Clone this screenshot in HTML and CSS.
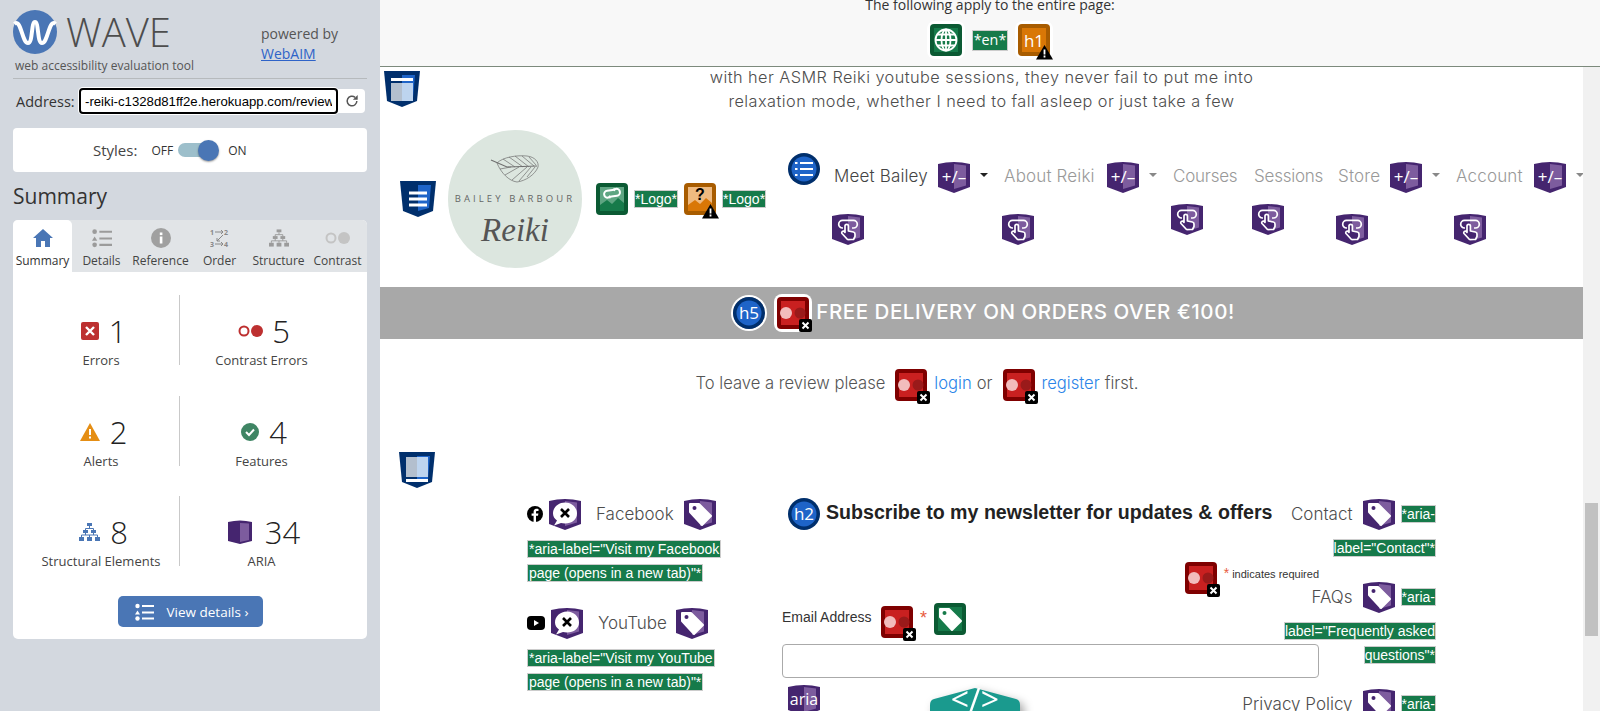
FILE: index.html
```html
<!DOCTYPE html>
<html lang="en">
<head>
<meta charset="utf-8">
<title>WAVE - Bailey Barbour Reiki</title>
<link rel="stylesheet" href="styles.css">
</head>
<body>
<svg class="sprite" aria-hidden="true">
  <defs>
    <g id="shield">
      <path fill="#45256f" d="M0 3Q16-1 32 3V26L16 32 0 26Z"/>
      <path fill="#7d5c9e" d="M16 3L28 4.500V24.500L16 28Z"/>
    </g>
    <g id="touch">
      <use href="#shield"/>
      <path fill="none" stroke="#fff" stroke-width="1.700" d="M11 15H10.500a3.800 3.800 0 0 1 0-7.600H21.500a3.800 3.800 0 0 1 0 7.600H20"/>
      <path fill="#45256f" stroke="#fff" stroke-width="1.700" stroke-linejoin="round" d="M13 13a1.700 1.700 0 0 1 3.400 0v5l5 1a2 2 0 0 1 1.600 2v2.500l-1.500 3h-6l-5.500-6a1.500 1.500 0 0 1 2.500-1.700l.5.500z"/>
    </g>
    <g id="tagshape">
      <path fill="#fff" stroke="#fff" stroke-width="2" stroke-linejoin="round" d="M6 6H15L27 18 18 27 6 14Z"/>
    </g>
    <g id="aria-tag">
      <use href="#shield"/>
      <use href="#tagshape"/>
      <circle cx="10.500" cy="10" r="2" fill="#45256f"/>
    </g>
    <g id="aria-x">
      <use href="#shield"/>
      <path fill="#fff" d="M16 4.500C23 4.500 28 9.500 28 15.500S23 25.500 16 25.500C14.500 25.500 13 25.300 12 25L5 27.500 8 22.500C5.500 20.800 4 18.500 4 15.500 4 9.500 9 4.500 16 4.500Z"/>
      <path stroke="#000" stroke-width="2.600" d="M12 11L20 19M20 11L12 19"/>
    </g>
    <g id="red">
      <rect width="32" height="32" rx="4" fill="#7f0000"/>
      <rect x="4" y="4" width="24" height="24" fill="#c92020"/>
      <circle cx="9" cy="16" r="6" fill="#f2bcbc"/>
      <circle cx="23" cy="16" r="5.500" fill="#9a1a1a"/>
      <rect x="22" y="22" width="13" height="13" rx="2" fill="#000"/>
      <path stroke="#fff" stroke-width="2" d="M25.500 25.500L31.500 31.500M31.500 25.500L25.500 31.500"/>
    </g>
    <g id="green">
      <rect width="32" height="32" rx="4" fill="#0b5a33"/>
      <rect x="4" y="4" width="24" height="24" fill="#167a4a"/>
    </g>
    <g id="green-tag">
      <use href="#green"/>
      <use href="#tagshape"/>
      <circle cx="10.500" cy="10" r="2" fill="#167a4a"/>
    </g>
    <g id="green-link">
      <use href="#green"/>
      <rect x="4" y="4" width="24" height="24" fill="#5fa582"/>
      <path fill="#167a4a" d="M4 28V22L11 17 16 21 22 15 28 20V28Z"/>
      <g fill="none" stroke="#fff" stroke-width="2" transform="rotate(-8 16 10)">
        <path d="M14 14H11.500a3.500 3.500 0 0 1 0-7H17a3.500 3.500 0 0 1 2.500 1"/>
        <path d="M18 6.500H20.500a3.500 3.500 0 0 1 0 7H15a3.500 3.500 0 0 1-2.500-1"/>
      </g>
    </g>
    <g id="green-globe">
      <use href="#green"/>
      <g fill="none" stroke="#fff" stroke-width="1.800">
        <circle cx="16" cy="16" r="10.500"/>
        <ellipse cx="16" cy="16" rx="4.500" ry="10.500"/>
        <path d="M16 5.500V26.500M5.500 16H26.500M7 10.500H25M7 21.500H25"/>
      </g>
    </g>
    <g id="warn">
      <path fill="#000" d="M26.500 21L35 35.500H18Z"/>
      <path stroke="#fff" stroke-width="1.800" d="M26.500 25.500V30.500M26.500 31.500V33.500"/>
    </g>
    <g id="orange-alt">
      <rect width="32" height="32" rx="4" fill="#a85c00"/>
      <rect x="4" y="4" width="24" height="24" fill="#efba80"/>
      <path fill="#d97706" d="M4 28V22L11 17 16 21 22 15 28 20V28Z"/>
    </g>
    <g id="orange">
      <rect width="32" height="32" rx="4" fill="#a85c00"/>
      <rect x="4" y="4" width="24" height="24" fill="#d97706"/>
    </g>
    <g id="blue-circle">
      <circle cx="16" cy="16" r="16" fill="#002f6c"/>
      <circle cx="16" cy="16" r="12.500" fill="#1e64c8"/>
    </g>
    <g id="struct-base">
      <path fill="#002f6c" d="M0 0H36L33 30 18 36 3 30Z"/>
      <path fill="#1e64c8" d="M18 4H31L29 27 18 30Z"/>
    </g>
    <g id="struct-main">
      <use href="#struct-base"/>
      <rect x="7" y="7" width="22" height="3" fill="#fff"/>
      <rect x="7" y="12" width="11" height="18" fill="#b3bfce"/>
      <rect x="18" y="12" width="11" height="18" fill="#bdd4ef"/>
    </g>
    <g id="struct-foot">
      <use href="#struct-base"/>
      <rect x="7" y="5" width="11" height="20" fill="#b3bfce"/>
      <rect x="18" y="5" width="11" height="20" fill="#bdd4ef"/>
      <rect x="7" y="27" width="22" height="3" fill="#fff"/>
    </g>
    <g id="struct-nav">
      <use href="#struct-base"/>
      <path stroke="#fff" stroke-width="2.800" d="M9 12H27M9 18H27M9 24H27"/>
    </g>
    <g id="list">
      <circle cx="2.500" cy="3" r="2.200" fill="currentColor"/>
      <path d="M2.500 7.500L5 11.500H0Z" fill="currentColor"/>
      <circle cx="2.500" cy="15.500" r="2.200" fill="currentColor"/>
      <path stroke="currentColor" stroke-width="2" d="M7 3H19M7 9.500H19M7 15.500H19"/>
    </g>
    <g id="tree" fill="currentColor">
      <rect x="8" y="0" width="5" height="3"/>
      <rect x="4" y="7" width="5" height="3"/>
      <rect x="12" y="7" width="5" height="3"/>
      <rect x="0" y="14" width="5" height="4"/>
      <rect x="8" y="14" width="5" height="4"/>
      <rect x="16" y="14" width="5" height="4"/>
      <path fill="none" stroke="currentColor" d="M10.500 3V5.500M6.500 7V5.500H14.500V7M6.500 10V12M14.500 10V12M2.500 14V12H18.500V14M10.500 12V14"/>
    </g>
  </defs>
</svg>

<aside class="sidebar">
  <div class="brand">
    <div class="brand-main">
      <div class="brand-logo">
        <svg class="wave-logo" viewBox="0 0 44 44"><circle cx="22" cy="22" r="22" fill="#4a76b5"/><path fill="none" stroke="#fff" stroke-width="4" d="M1.500 14C8 8 9 33 15 33 20 33 18 12 22 12 26 12 24 33 29 33 35 33 36 8 42.500 14"/></svg>
        <span class="wave-name">WAVE</span>
      </div>
      <div class="tagline">web accessibility evaluation tool</div>
    </div>
    <div class="powered">powered by<br><a href="#">WebAIM</a></div>
  </div>

  <div class="address">
    <label class="address-label" for="addr">Address:</label>
    <input class="address-input" id="addr" type="text" value="-reiki-c1328d81ff2e.herokuapp.com/review">
    <button class="reload" aria-label="Reload">
      <svg viewBox="0 0 16 16" width="14" height="14"><path fill="none" stroke="#555" stroke-width="1.700" d="M13.500 8A5.500 5.500 0 1 1 11.500 3.800"/><path fill="#555" d="M14.500 1V6.500H9Z"/></svg>
    </button>
  </div>

  <div class="styles-card">
    <span class="styles-label">Styles:</span>
    <span class="styles-opt off">OFF</span>
    <span class="toggle"><span class="knob"></span></span>
    <span class="styles-opt">ON</span>
  </div>

  <h2 class="summary-title">Summary</h2>

  <div class="panel">
    <nav class="tabs">
      <div class="tab active">
        <svg class="tab-ico" viewBox="0 0 20 18"><path fill="#4a76b5" d="M10 0L20 9H17V18H12V12H8V18H3V9H0Z"/></svg>
        <span>Summary</span>
      </div>
      <div class="tab">
        <svg class="tab-ico grey" viewBox="0 0 19 18"><use href="#list"/></svg>
        <span>Details</span>
      </div>
      <div class="tab">
        <svg class="tab-ico" viewBox="0 0 20 20"><circle cx="10" cy="10" r="10" fill="#a0a0a0"/><rect x="8.800" y="8.500" width="2.600" height="7" fill="#fff"/><rect x="8.800" y="4.500" width="2.600" height="2.600" fill="#fff"/></svg>
        <span>Reference</span>
      </div>
      <div class="tab">
        <svg class="tab-ico" viewBox="0 0 20 20"><g class="order-nums"><text x="0" y="7">1</text><text x="14" y="7">2</text><text x="0" y="19">3</text><text x="14" y="19">4</text></g><path fill="none" stroke="#888" d="M5 4H13M11 2L13 4 11 6M5 16H13M11 14L13 16 11 18M13 7L7 13M7 10V13H10"/></svg>
        <span>Order</span>
      </div>
      <div class="tab">
        <svg class="tab-ico grey" viewBox="0 0 21 18"><use href="#tree"/></svg>
        <span>Structure</span>
      </div>
      <div class="tab">
        <svg class="tab-ico wide" viewBox="0 0 25 12"><circle cx="6" cy="6" r="4.500" fill="none" stroke="#c4c4c4" stroke-width="2"/><circle cx="19" cy="6" r="6" fill="#c4c4c4"/></svg>
        <span>Contrast</span>
      </div>
    </nav>

    <div class="stats">
      <div class="stat">
        <div class="stat-line">
          <svg class="stat-ico" viewBox="0 0 18 18"><rect width="18" height="18" rx="2" fill="#bd3030"/><path stroke="#fff" stroke-width="2.400" d="M5 5L13 13M13 5L5 13"/></svg>
          <span class="stat-num">1</span>
        </div>
        <div class="stat-label">Errors</div>
      </div>
      <div class="stat">
        <div class="stat-line">
          <svg class="stat-ico wide" viewBox="0 0 25 12"><circle cx="6" cy="6" r="4.500" fill="none" stroke="#bd3030" stroke-width="2"/><circle cx="19" cy="6" r="6" fill="#bd3030"/></svg>
          <span class="stat-num">5</span>
        </div>
        <div class="stat-label">Contrast Errors</div>
      </div>
      <div class="stat">
        <div class="stat-line">
          <svg class="stat-ico tri" viewBox="0 0 20 18"><path fill="#e58e14" d="M10 0L20 18H0Z"/><path stroke="#fff" stroke-width="2" d="M10 6V12M10 13.500V15.500"/></svg>
          <span class="stat-num">2</span>
        </div>
        <div class="stat-label">Alerts</div>
      </div>
      <div class="stat">
        <div class="stat-line">
          <svg class="stat-ico" viewBox="0 0 18 18"><circle cx="9" cy="9" r="9" fill="#3f8564"/><path fill="none" stroke="#fff" stroke-width="2" d="M5 9L8 12 13 6.500"/></svg>
          <span class="stat-num">4</span>
        </div>
        <div class="stat-label">Features</div>
      </div>
      <div class="stat">
        <div class="stat-line">
          <svg class="stat-ico tree-ico" viewBox="0 0 21 18"><use href="#tree"/></svg>
          <span class="stat-num">8</span>
        </div>
        <div class="stat-label">Structural Elements</div>
      </div>
      <div class="stat">
        <div class="stat-line">
          <svg class="stat-ico aria-ico" viewBox="0 0 24 24"><path fill="#45256f" d="M0 2Q12-1 24 2V21L12 24 0 21Z"/><path fill="#7d5c9e" d="M12 3L21 3.500V20L12 22Z"/></svg>
          <span class="stat-num">34</span>
        </div>
        <div class="stat-label">ARIA</div>
      </div>
    </div>

    <a class="view-details" href="#">
      <svg class="view-ico" viewBox="0 0 19 18"><use href="#list"/></svg>
      <span>View details ›</span>
    </a>
  </div>
</aside>

<main class="main">
  <header class="notice-bar">
    <p class="notice-text">The following apply to the entire page:</p>
    <div class="notice-icons">
      <svg class="ico ring" viewBox="0 0 32 32"><use href="#green-globe"/></svg>
      <span class="tag-en">*en*</span>
      <svg class="ico ring" viewBox="0 0 32 32"><use href="#orange"/><text class="ico-text" x="16" y="22.500" text-anchor="middle" font-size="17">h1</text><use href="#warn"/></svg>
    </div>
  </header>

  <div class="viewport">
    <div class="page">
      <svg class="struct over-main" viewBox="0 0 36 36"><use href="#struct-main"/></svg>
      <p class="quote">with her ASMR Reiki youtube sessions, they never fail to put me into<br>relaxation mode, whether I need to fall asleep or just take a few</p>

      <div class="site-header">
        <svg class="struct header-struct" viewBox="0 0 36 36"><use href="#struct-nav"/></svg>
        <svg class="logo" viewBox="0 0 136 140">
          <ellipse cx="68" cy="70" rx="67" ry="69" fill="#dce6df"/>
          <g fill="none" stroke="#6f6f6f" stroke-width=".7">
            <path stroke-width="1.100" d="M44 31L60 38 90 37"/>
            <path d="M50 34C56 28 70 26 80 27 88 28 92 33 91 38 88 46 78 52 70 53 62 52 54 44 50 34Z"/>
            <path d="M56 30L68 38M62 28L76 38M68 27L82 38M75 27L87 37M82 28L89 36M53 40L64 38M58 46L72 38M65 51L80 38M72 52L84 38M80 48L88 38"/>
          </g>
          <text class="logo-top" x="68" y="73" text-anchor="middle">BAILEY BARBOUR</text>
          <text class="logo-script" x="68" y="112" text-anchor="middle">Reiki</text>
        </svg>
        <svg class="ico hdr-link" viewBox="0 0 32 32"><use href="#green-link"/></svg>
        <span class="tag tag-hdr">*Logo*</span>
        <svg class="ico hdr-alt" viewBox="0 0 32 32"><use href="#orange-alt"/><text x="16" y="17" text-anchor="middle" class="qmark">?</text><use href="#warn"/></svg>
        <span class="tag tag-hdr">*Logo*</span>

        <nav class="site-nav">
          <svg class="ico nav-list" viewBox="0 0 32 32"><use href="#blue-circle"/><path stroke="#fff" stroke-width="2.200" d="M12 10H25M12 16H25M12 22H25M7 10H9.500M7 16H9.500M7 22H9.500"/></svg>
          <div class="nav-item">
            <div class="nav-top">
              <a class="nav-link dark w-meet" href="#">Meet Bailey</a>
              <svg class="ico" viewBox="0 0 32 32"><use href="#shield"/><text class="ico-text" x="16" y="21.500" text-anchor="middle" font-size="17">+/–</text></svg>
              <span class="caret dark-caret"></span>
            </div>
            <svg class="ico nav-bottom" viewBox="0 0 32 32"><use href="#touch"/></svg>
          </div>
          <div class="nav-item">
            <div class="nav-top">
              <a class="nav-link w-about" href="#">About Reiki</a>
              <svg class="ico" viewBox="0 0 32 32"><use href="#shield"/><text class="ico-text" x="16" y="21.500" text-anchor="middle" font-size="17">+/–</text></svg>
              <span class="caret"></span>
            </div>
            <svg class="ico nav-bottom" viewBox="0 0 32 32"><use href="#touch"/></svg>
          </div>
          <div class="nav-item plain">
            <div class="nav-top"><a class="nav-link w-courses" href="#">Courses</a></div>
            <svg class="ico nav-bottom" viewBox="0 0 32 32"><use href="#touch"/></svg>
          </div>
          <div class="nav-item plain">
            <div class="nav-top"><a class="nav-link w-sessions" href="#">Sessions</a></div>
            <svg class="ico nav-bottom" viewBox="0 0 32 32"><use href="#touch"/></svg>
          </div>
          <div class="nav-item">
            <div class="nav-top">
              <a class="nav-link w-store" href="#">Store</a>
              <svg class="ico" viewBox="0 0 32 32"><use href="#shield"/><text class="ico-text" x="16" y="21.500" text-anchor="middle" font-size="17">+/–</text></svg>
              <span class="caret"></span>
            </div>
            <svg class="ico nav-bottom" viewBox="0 0 32 32"><use href="#touch"/></svg>
          </div>
          <div class="nav-item">
            <div class="nav-top">
              <a class="nav-link w-account" href="#">Account</a>
              <svg class="ico" viewBox="0 0 32 32"><use href="#shield"/><text class="ico-text" x="16" y="21.500" text-anchor="middle" font-size="17">+/–</text></svg>
              <span class="caret"></span>
            </div>
            <svg class="ico nav-bottom" viewBox="0 0 32 32"><use href="#touch"/></svg>
          </div>
        </nav>
      </div>

      <div class="promo">
        <svg class="ico ring-round" viewBox="0 0 32 32"><use href="#blue-circle"/><text class="ico-text" x="16" y="22" text-anchor="middle" font-size="17">h5</text></svg>
        <svg class="ico ring" viewBox="0 0 32 32"><use href="#red"/></svg>
        <span class="promo-text">FREE DELIVERY ON ORDERS OVER €100!</span>
      </div>

      <div class="review-note">
        <span>To leave a review please</span>
        <svg class="ico note-ico" viewBox="0 0 32 32"><use href="#red"/></svg>
        <a href="#">login</a>
        <span>or</span>
        <svg class="ico note-ico" viewBox="0 0 32 32"><use href="#red"/></svg>
        <a href="#">register</a>
        <span>first.</span>
      </div>

      <svg class="struct footer-struct" viewBox="0 0 36 36"><use href="#struct-foot"/></svg>

      <div class="footer-grid">
        <div class="col-social">
          <div class="social-row">
            <svg class="brand-ico" viewBox="0 0 16 16"><circle cx="8" cy="8" r="8" fill="#000"/><path fill="#fff" d="M9 16V9.800H11L11.400 7.500H9V6C9 5.300 9.300 4.900 10.200 4.900H11.500V2.900C11 2.800 10.400 2.700 9.800 2.700 7.800 2.700 6.600 3.900 6.600 5.800V7.500H4.600V9.800H6.600V16Z"/></svg>
            <svg class="ico" viewBox="0 0 32 32"><use href="#aria-x"/></svg>
            <a class="foot-link fb" href="#">Facebook</a>
            <svg class="ico" viewBox="0 0 32 32"><use href="#aria-tag"/></svg>
          </div>
          <p class="aria-lines w-fb"><span class="tag">*aria-label="Visit my Facebook page (opens in a new tab)"*</span></p>
          <div class="social-row">
            <svg class="brand-ico yt" viewBox="0 0 18 14"><rect width="18" height="14" rx="4" fill="#000"/><path fill="#fff" d="M7 4L12 7 7 10Z"/></svg>
            <svg class="ico" viewBox="0 0 32 32"><use href="#aria-x"/></svg>
            <a class="foot-link yt-link" href="#">YouTube</a>
            <svg class="ico" viewBox="0 0 32 32"><use href="#aria-tag"/></svg>
          </div>
          <p class="aria-lines w-fb"><span class="tag">*aria-label="Visit my YouTube page (opens in a new tab)"*</span></p>
        </div>

        <div class="col-form">
          <div class="form-head">
            <svg class="ico" viewBox="0 0 32 32"><use href="#blue-circle"/><text class="ico-text" x="16" y="22" text-anchor="middle" font-size="17">h2</text></svg>
            <h2>Subscribe to my newsletter for updates &amp; offers</h2>
          </div>
          <div class="required-row">
            <svg class="ico" viewBox="0 0 32 32"><use href="#red"/></svg>
            <span class="required-text"><span class="star">*</span> indicates required</span>
          </div>
          <div class="email-row">
            <label class="email-label" for="email">Email Address</label>
            <svg class="ico email-red" viewBox="0 0 32 32"><use href="#red"/></svg>
            <span class="star big">*</span>
            <svg class="ico" viewBox="0 0 32 32"><use href="#green-tag"/></svg>
          </div>
          <input class="email-input" id="email" type="email">
          <svg class="ico form-aria" viewBox="0 0 32 32"><use href="#shield"/><text class="ico-text" x="16" y="21" text-anchor="middle" font-size="16">aria</text></svg>
        </div>

        <div class="col-links">
          <div class="link-row">
            <a class="foot-link" href="#">Contact</a>
            <svg class="ico" viewBox="0 0 32 32"><use href="#aria-tag"/></svg>
            <span class="tag tag-tight">*aria-</span>
          </div>
          <p class="aria-lines right"><span class="tag tag-tight">label="Contact"*</span></p>
          <div class="link-row">
            <a class="foot-link" href="#">FAQs</a>
            <svg class="ico" viewBox="0 0 32 32"><use href="#aria-tag"/></svg>
            <span class="tag tag-tight">*aria-</span>
          </div>
          <p class="aria-lines right"><span class="tag tag-tight">label="Frequently asked questions"*</span></p>
          <div class="link-row">
            <a class="foot-link" href="#">Privacy Policy</a>
            <svg class="ico" viewBox="0 0 32 32"><use href="#aria-tag"/></svg>
            <span class="tag tag-tight">*aria-</span>
          </div>
        </div>
      </div>

      <svg class="code-fab" viewBox="0 0 90 50"><path fill="#1a9a8e" d="M45 0L86 11Q90 12 90 17V50H0V17Q0 12 4 11Z"/><text class="fab-text" x="45" y="23" text-anchor="middle">&lt;/&gt;</text></svg>
    </div>
    <div class="scrollbar"><div class="scroll-thumb"></div></div>
  </div>
</main>
</body>
</html>
```

FILE: styles.css
```css
* { box-sizing: border-box; }
html, body { margin: 0; height: 100%; }
body {
  display: flex;
  width: 1600px;
  height: 711px;
  overflow: hidden;
  font-family: "Open Sans", sans-serif;
  color: #333;
  background: #fff;
}
p, h2 { margin: 0; }
a { text-decoration: none; }
.sprite { position: absolute; width: 0; height: 0; }

/* ---------- sidebar ---------- */
.sidebar {
  flex: 0 0 380px;
  height: 711px;
  padding: 10px 13px 0;
  background: #d3d8df;
}
.brand {
  display: flex;
  height: 69px;
  border-bottom: 1px solid #b6babd;
}
.brand-main { width: 248px; }
.brand-logo { display: flex; align-items: center; height: 44px; }
.wave-logo { width: 44px; height: 44px; margin-right: 9px; }
.wave-name { font-size: 40px; font-weight: 300; color: #4d4d4d; line-height: 44px; }
.tagline { margin: 3px 0 0 2px; font-size: 12px; line-height: 18px; color: #555; white-space: nowrap; }
.powered { margin-top: 14px; font-size: 14px; line-height: 19.500px; color: #555; }
.powered a { color: #2e63c8; text-decoration: underline; }

.address { display: flex; align-items: center; height: 26px; margin: 9px 2px 0 0; padding-left: 3px; }
.address-label { width: 63px; font-size: 14.500px; color: #333; white-space: nowrap; }
.address-input {
  width: 259px;
  height: 26px;
  padding: 0 4px;
  border: 2px solid #000;
  border-radius: 4px;
  box-shadow: 0 0 0 1px #fff;
  font: 13.200px "Liberation Sans", sans-serif;
  color: #000;
  background: #fff;
}
.reload {
  display: flex;
  align-items: center;
  justify-content: center;
  width: 27px;
  height: 24px;
  padding: 0;
  border: 0;
  border-radius: 0 4px 4px 0;
  background: #fff;
}

.styles-card {
  display: flex;
  align-items: center;
  height: 44px;
  margin-top: 14px;
  padding-left: 80px;
  border-radius: 4px;
  background: #fff;
}
.styles-label { margin-right: 14px; font-size: 15px; color: #444; }
.styles-opt { font-size: 12px; color: #333; }
.toggle { position: relative; width: 36px; height: 14px; margin: 0 14px 0 5px; border-radius: 7px; background: #9dbfcb; }
.knob {
  position: absolute;
  top: -3.500px;
  right: -5px;
  width: 21px;
  height: 21px;
  border-radius: 50%;
  background: #4a76b5;
  box-shadow: 0 1px 2px rgba(0,0,0,.4);
}

.summary-title { margin: 4px 0 4px; font-size: 21px; font-weight: 400; line-height: 40px; color: #333; }

.panel { height: 419px; border-radius: 5px; background: #fff; }
.tabs { display: flex; height: 52px; border-radius: 5px 5px 0 0; background: #e1e4e7; }
.tab { display: flex; flex: 1; flex-direction: column; align-items: center; min-width: 0; padding-top: 8px; font-size: 12px; color: #444; white-space: nowrap; border-radius: 5px 5px 0 0; }
.tab.active { background: #fff; color: #333; }
.tab span { margin-top: 4px; line-height: 17px; }
.tab-ico { width: 20px; height: 20px; }
.tab-ico.grey { color: #9b9b9b; }
.tab-ico.wide { width: 25px; }
.order-nums text { font: 700 7px "Open Sans", sans-serif; fill: #888; }

.stats {
  display: grid;
  grid-template-columns: 156px 164px;
  grid-auto-rows: 70px;
  row-gap: 30.500px;
  margin: 23px 0 0 10px;
}
.stat { text-align: center; }
.stat:nth-child(even) { border-left: 1px solid #c9c9c9; }
.stat-line { display: flex; align-items: center; justify-content: center; height: 44px; margin-top: 14px; padding-left: 5px; }
.stat-ico { width: 18px; height: 18px; margin-right: 10px; }
.stat-ico.wide { width: 25px; margin-right: 9px; }
.stat-ico.tri { width: 20px; }
.stat-ico.tree-ico { width: 21px; color: #4a76b5; }
.stat-ico.aria-ico { width: 24px; height: 24px; margin-right: 13px; }
.stat-num { font-size: 31px; font-weight: 300; color: #222; line-height: 44px; }
.stat-label { font-size: 13px; line-height: 14px; color: #444; white-space: nowrap; }

.view-details {
  display: flex;
  align-items: center;
  width: 145px;
  height: 31px;
  margin: 30px auto 0;
  padding-left: 17px;
  border-radius: 5px;
  background: #4a76b5;
  color: #fff;
  font-size: 13.500px;
}
.view-ico { width: 19px; height: 18px; margin-right: 13px; color: #fff; }

/* ---------- main ---------- */
.main { display: flex; flex: 1; flex-direction: column; min-width: 0; height: 711px; }
.notice-bar { flex: 0 0 67px; overflow: hidden; border-bottom: 1px solid #7c8a7c; background: #f8f8f8; text-align: center; }
.notice-text { margin-top: -5px; font-size: 14px; line-height: 20px; color: #333; }
.notice-icons { display: flex; justify-content: center; align-items: center; gap: 10px; margin-top: 9px; }
.tag-en { height: 21px; padding: 0 1px; border: 1px solid #ccc; background: #167a4a; color: #fff; font-size: 14.300px; line-height: 18px; }

.ico { flex: none; width: 32px; height: 32px; overflow: visible; }
.ring { border-radius: 5px; background: #fff; box-shadow: 0 0 0 3px #fff; }
.ring-round { border-radius: 50%; box-shadow: 0 0 0 2px #fff; }
.ico-text { font-family: "Open Sans", sans-serif; font-weight: 400; fill: #fff; }
.qmark { font: 700 16px "Liberation Sans", sans-serif; fill: #000; }

.viewport { display: flex; flex: 1; min-height: 0; }
.page { position: relative; flex: 1; min-width: 0; overflow: hidden; background: #fff; font-family: Inter, sans-serif; font-weight: 300; color: #555; }
.scrollbar { flex: 0 0 17px; padding: 436px 2px 0; background: #f1f1f1; }
.scroll-thumb { height: 133px; background: #c1c1c1; }

.struct { display: block; width: 36px; height: 36px; }
.over-main { position: absolute; left: 4px; top: 4px; }

.quote { margin-top: -2px; height: 60px; font-size: 16.300px; line-height: 24px; text-align: center; color: #4d4d4d; letter-spacing: .45px; }

.site-header { display: flex; align-items: flex-start; height: 162px; padding: 4px 0 0 20px; }
.header-struct { flex: none; margin-top: 52px; }
.logo { flex: none; width: 136px; height: 140px; margin-left: 11px; }
.logo-top { font: 400 9.500px "Open Sans", sans-serif; letter-spacing: 3.100px; fill: #666; }
.logo-script { font: italic 400 33px "Liberation Serif", serif; fill: #555; }
.hdr-link { margin: 54px 0 0 13px; }
.hdr-alt { margin: 54px 0 0 6px; }

.tag { padding: 0 1px; border: 1px solid #ccc; background: #167a4a; color: #fff; font: 400 14px "Liberation Sans", sans-serif; -webkit-box-decoration-break: clone; box-decoration-break: clone; }
.tag-hdr { margin: 61px 0 0 6px; padding: 0; line-height: 16px; }
.tag-tight { padding: 0; }

.site-nav { display: flex; flex: none; align-items: flex-start; gap: 14px; margin: 24px 0 0 22px; }
.nav-list { margin-right: -2px; }
.nav-item { padding-top: 8px; }
.nav-top { display: flex; align-items: flex-start; height: 32px; }
.nav-link { padding-left: 2px; font-size: 17px; line-height: 30px; letter-spacing: .15px; color: #999; white-space: nowrap; }
.nav-link.dark { color: #444; }
.w-meet { width: 106px; }
.w-about { width: 105px; }
.w-courses { width: 67px; letter-spacing: -.25px; }
.w-sessions { width: 70px; letter-spacing: -.25px; }
.w-store { width: 54px; }
.w-account { width: 80px; }
.caret { flex: none; width: 0; height: 0; margin: 12px 0 0 10px; border: 4px solid transparent; border-top: 4px solid #888; border-bottom: 0; }
.dark-caret { border-top-color: #222; }
.nav-bottom { display: block; margin-top: 20px; }
.plain .nav-bottom { margin-top: 10px; }

.promo { display: flex; align-items: center; justify-content: center; height: 52px; padding-left: 5px; background: #a8a8a8; }
.promo .ring-round { margin-right: 12px; }
.promo .ring { margin-right: 7px; }
.promo-text { margin-bottom: 3px; font-size: 20.500px; font-weight: 500; letter-spacing: .55px; color: #fff; white-space: nowrap; }

.review-note { display: flex; align-items: center; justify-content: center; height: 113px; padding: 0 124px 22px 0; font-size: 16.600px; color: #555; }
.review-note a { margin-bottom: 3px; color: #2a84e8; }
.review-note span { margin-bottom: 3px; }
.review-note > * { margin-right: 5px; }
.note-ico { margin: 0 7px 0 5px; }

.footer-struct { margin-left: 19px; }
.footer-grid {
  display: grid;
  grid-template-columns: 255px 537px 117px;
  align-items: start;
  margin-top: 10px;
  padding-left: 147px;
}
.col-social { min-width: 0; }
.social-row { display: flex; align-items: center; height: 32px; }
.brand-ico { flex: none; width: 16px; height: 16px; margin-right: 6px; }
.brand-ico.yt { width: 18px; height: 14px; }
.foot-link { font-size: 17px; color: #4d4d4d; white-space: nowrap; }
.fb { width: 88px; margin-left: 15px; }
.yt-link { width: 78px; margin-left: 15px; }
.aria-lines { margin: 7px 0 22px; font-size: 14px; line-height: 24px; }
.w-fb { width: 196px; }
.aria-lines.right { margin: 6px 0 21px; text-align: right; }

.form-head { display: flex; align-items: center; gap: 6px; height: 32px; padding-left: 6px; }
.form-head h2 { margin-bottom: 4px; font: 700 19.600px "Liberation Sans", sans-serif; color: #222; white-space: nowrap; }
.required-row { display: flex; justify-content: flex-end; height: 32px; margin-top: 32px; }
.required-text { margin: 3px 0 0 7px; font: 400 11px/16px "Liberation Sans", sans-serif; color: #333; }
.star { color: #e85c41; font-size: 14px; }
.star.big { margin: 1px 7px 0; font: 400 18px/28px "Liberation Sans", sans-serif; }
.email-row { display: flex; align-items: flex-start; height: 35px; margin-top: 9px; }
.email-label { width: 99px; margin-top: 5px; font: 400 14px/18px "Liberation Sans", sans-serif; color: #333; }
.email-red { margin-top: 3px; }
.email-input { display: block; width: 537px; height: 34px; margin-top: 6px; border: 1px solid #aaa; border-radius: 4px; background: #fff; }
.form-aria { display: block; margin: 6px 0 0 6px; }

.col-links { width: 160px; margin-left: -43px; }
.link-row { display: flex; align-items: center; justify-content: flex-end; height: 32px; }
.link-row .ico { margin: 0 6px 0 10px; }

.code-fab { position: absolute; left: 550px; top: 621px; width: 90px; height: 50px; filter: drop-shadow(4px 4px 5px rgba(0,0,0,.35)); }
.fab-text { font: 400 32px "Open Sans", sans-serif; fill: #fff; }
```
